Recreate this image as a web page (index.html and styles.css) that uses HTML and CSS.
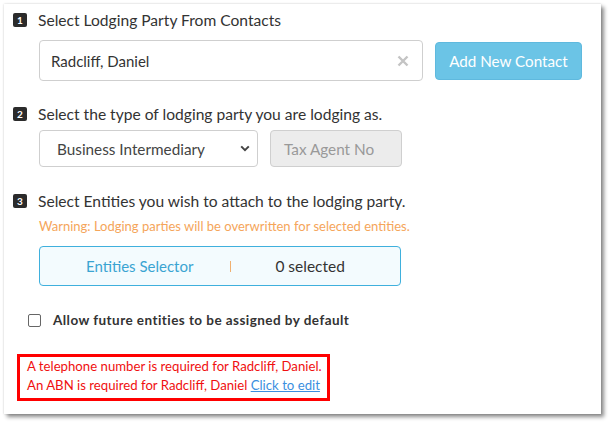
FILE: index.html
```html
<!DOCTYPE html>
<html>
<head>
<meta charset="utf-8">
<link rel="stylesheet" href="styles.css">
</head>
<body>
<div class="panel">
  <div class="step-head step1">
    <span class="badge">1</span>
    <span class="step-title">Select Lodging Party From Contacts</span>
  </div>
  <div class="row row1">
    <div class="contact-input">
      <span class="contact-name">Radcliff, Daniel</span>
      <svg class="clear" width="12" height="12" viewBox="0 0 12 12"><path d="M1.5 1.5 L10.5 10.5 M10.5 1.5 L1.5 10.5" stroke="#c4c4c4" stroke-width="2.4" stroke-linecap="butt"/></svg>
    </div>
    <button class="btn-add">Add New Contact</button>
  </div>

  <div class="step-head step2">
    <span class="badge">2</span>
    <span class="step-title">Select the type of lodging party you are lodging as.</span>
  </div>
  <div class="row row2">
    <div class="select">
      <span>Business Intermediary</span>
      <svg class="chev" width="10" height="7" viewBox="0 0 10 7"><path d="M1.2 1.4 L5 5.2 L8.8 1.4" fill="none" stroke="#444" stroke-width="2"/></svg>
    </div>
    <div class="tax-input">Tax Agent No</div>
  </div>

  <div class="step-head step3">
    <span class="badge">3</span>
    <span class="step-title">Select Entities you wish to attach to the lodging party.</span>
  </div>
  <div class="warning">Warning: Lodging parties will be overwritten for selected entities.</div>
  <div class="entities">
    <span class="ent-label">Entities Selector</span>
    <span class="ent-sep"></span>
    <span class="ent-count">0 selected</span>
  </div>

  <label class="check-row">
    <span class="checkbox"></span>
    <span class="check-label">Allow future entities to be assigned by default</span>
  </label>

  <div class="errors">
    <div>A telephone number is required for Radcliff, Daniel.</div>
    <div>An ABN is required for Radcliff, Daniel <a href="#" class="edit-link">Click to edit</a></div>
  </div>
</div>
</body>
</html>
```

FILE: styles.css
```css
* { box-sizing: border-box; }
html, body { margin: 0; padding: 0; background: #fff; }
body {
  font-family: Lato, "Open Sans", "Liberation Sans", sans-serif;
  color: #333;
  width: 610px;
  height: 425px;
  overflow: hidden;
}
.panel {
  margin: 4px 0 0 4px;
  width: 597px;
  height: 410px;
  background: #fff;
  box-shadow: 0 0 2px rgba(0,0,0,0.18), 3px 3px 4px rgba(0,0,0,0.45);
  padding: 0 0 0 9px;
  display: flow-root;
}
.step-head {
  display: flex;
  align-items: center;
  gap: 11px;
  height: 22px;
}
.step1 { margin-top: 5px; }
.step2 { margin-top: 22px; }
.step3 { margin-top: 23px; }
.badge {
  width: 14px;
  height: 14px;
  border-radius: 2px;
  background: #2b2b2b;
  color: #fff;
  font-size: 10px;
  font-weight: 700;
  display: flex;
  align-items: center;
  justify-content: center;
  line-height: 1;
}
.step-title {
  font-size: 15.6px;
  color: #333;
}
.row {
  display: flex;
  align-items: center;
  margin-left: 26px;
}
.row1 { margin-top: 9px; gap: 12px; }
.contact-input {
  width: 384px;
  height: 41px;
  border: 1px solid #cfcfcf;
  border-radius: 4px;
  display: flex;
  align-items: center;
  justify-content: space-between;
  padding: 0 13px 0 11px;
  font-size: 15px;
  color: #333;
}
.clear { display: block; }
.btn-add {
  width: 147px;
  height: 38px;
  border: 1px solid #5fb9de;
  border-radius: 4px;
  background: #6bc4e6;
  color: #fff;
  font-family: inherit;
  font-size: 15.2px;
  padding: 0;
}
.row2 { margin-top: 5px; gap: 12px; }
.select {
  width: 219px;
  height: 37px;
  border: 1px solid #cfcfcf;
  border-radius: 4px;
  display: flex;
  align-items: center;
  justify-content: space-between;
  padding: 0 7px 0 17px;
  font-size: 15.3px;
  color: #444;
}
.chev { display: block; }
.tax-input {
  width: 132px;
  height: 37px;
  border: 1px solid #cfcfcf;
  border-radius: 4px;
  background: #ececec;
  display: flex;
  align-items: center;
  padding-left: 13px;
  font-size: 15.3px;
  color: #999;
}
.warning {
  margin: 5px 0 0 26px;
  font-size: 13px;
  color: #f5a55a;
  height: 18px;
  line-height: 18px;
}
.entities {
  margin: 11px 0 0 26px;
  width: 362px;
  height: 40px;
  border: 1px solid #3fb0dd;
  border-radius: 4px;
  background: #f3fbfe;
  display: flex;
  align-items: center;
  font-size: 15px;
}
.ent-label { color: #3aa4d2; margin-left: 46px; }
.ent-sep {
  width: 1px;
  height: 11px;
  background: #f0b070;
  margin-left: 37px;
}
.ent-count { color: #333; margin-left: 44px; font-size: 15.5px; }
.check-row {
  display: flex;
  align-items: center;
  margin: 26px 0 0 15px;
  height: 16px;
}
.checkbox {
  width: 13px;
  height: 13px;
  border: 1px solid #666;
  border-radius: 2px;
  background: #fff;
}
.check-label {
  margin-left: 12px;
  font-size: 13.5px;
  font-weight: 700;
  letter-spacing: 0.45px;
  color: #333;
}
.errors {
  margin: 26px 0 0 4px;
  width: 313px;
  height: 47px;
  border: 3px solid #f00;
  padding: 0 0 0 7px;
  font-size: 13.2px;
  color: #f01010;
  line-height: 19px;
}
.edit-link {
  color: #3b8fe0;
  text-decoration: underline;
}
```
